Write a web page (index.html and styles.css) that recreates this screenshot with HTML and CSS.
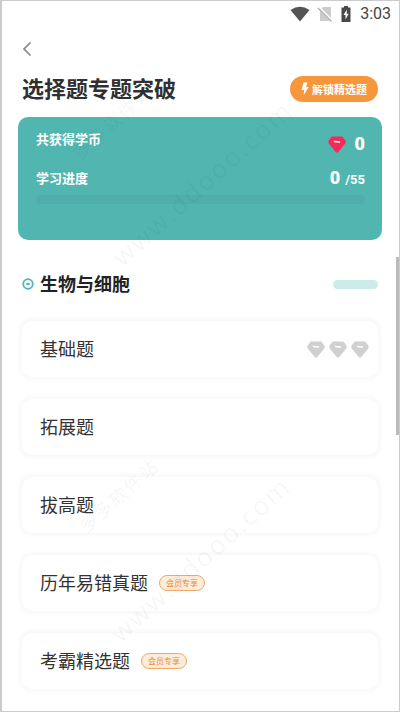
FILE: index.html
```html
<!DOCTYPE html>
<html lang="zh-CN">
<head>
<meta charset="utf-8">
<meta name="viewport" content="width=device-width, initial-scale=1">
<title>选择题专题突破</title>
<link rel="stylesheet" href="styles.css">
</head>
<body>
<svg class="defs" aria-hidden="true">
  <symbol id="gem" viewBox="0 0 18 17">
    <path d="M4 1h10l3 4.200v1.600L9.600 15.800h-1.200L1 6.800V5.200z" fill="currentColor" stroke="currentColor" stroke-width="1.200" stroke-linejoin="round"/>
    <path class="gem-shine" d="M6.500 5.500l5 .5" fill="none" stroke-width="1.600" stroke-linecap="round"/>
  </symbol>
</svg>
<div class="screen">
  <div class="status">
    <svg class="wifi" viewBox="0 0 20 16" aria-hidden="true"><path d="M.5 4Q10-2.500 19.500 4L10 15.500z" fill="#555"/></svg>
    <svg class="sim" viewBox="0 0 16 16" aria-hidden="true"><path d="M6 1h8v14H3V4z" fill="#ccc"/><path d="M1 1l14 14" stroke="#fff" stroke-width="3"/><path d="M1 2l13.500 13.500" stroke="#aaa" stroke-width="1.200"/></svg>
    <svg class="battery" viewBox="0 0 10 16" aria-hidden="true"><path d="M3 0h4v1.500h2.500V16h-9V1.500H3z" fill="#484848"/><path d="M5.800 3.500L2.500 9h2v4.500L7.700 7.800h-2z" fill="#fff"/></svg>
    <span class="clock">3:03</span>
  </div>
  <button class="back" type="button" aria-label="返回">
    <svg viewBox="0 0 10 16" aria-hidden="true"><path d="M8.500 1.500L2 8l6.500 6.500" fill="none" stroke="#888" stroke-width="1.700"/></svg>
  </button>
  <header class="title-row">
    <h1>选择题专题突破</h1>
    <button class="unlock" type="button">
      <svg viewBox="0 0 8 14" aria-hidden="true"><path d="M2.500.5h4L5 5h2.700L2.500 13.500 3.300 8H.5z" fill="#fff"/></svg>
      解锁精选题
    </button>
  </header>
  <section class="summary">
    <div class="stat">
      <span>共获得学币</span>
      <span class="value"><svg class="gem red" aria-hidden="true"><use href="#gem"/></svg><b>0</b></span>
    </div>
    <div class="stat">
      <span>学习进度</span>
      <span class="value progress"><b>0</b><small>/55</small></span>
    </div>
    <div class="track"></div>
  </section>
  <main>
    <div class="section-head">
      <svg class="target" viewBox="0 0 12 12" aria-hidden="true"><circle cx="6" cy="6" r="4.800" fill="#e9f8f6" stroke="#52b6b0" stroke-width="1.700"/><path d="M5.200 6h1.600" stroke="#52b6b0" stroke-width="2" stroke-linecap="round"/></svg>
      <h2>生物与细胞</h2>
      <span class="pill"></span>
    </div>
    <ul class="topics">
      <li><a href="#"><span class="topic">基础题</span><span class="gems"><svg class="gem"><use href="#gem"/></svg><svg class="gem"><use href="#gem"/></svg><svg class="gem"><use href="#gem"/></svg></span></a></li>
      <li><a href="#"><span class="topic">拓展题</span></a></li>
      <li><a href="#"><span class="topic">拔高题</span></a></li>
      <li><a href="#"><span class="topic">历年易错真题</span><span class="member">会员专享</span></a></li>
      <li><a href="#"><span class="topic">考霸精选题</span><span class="member">会员专享</span></a></li>
    </ul>
  </main>
  <div class="scrollbar"></div>
  <div class="mark site first">www.ddooo.com</div>
  <div class="mark name first">多多软件站</div>
  <div class="mark site second">www.ddooo.com</div>
  <div class="mark name second">多多软件站</div>
</div>
</body>
</html>
```

FILE: styles.css
```css
* { box-sizing: border-box; }
body {
  margin: 0;
  background: #fff;
  color: #303030;
  font-family: "Noto Sans CJK SC", sans-serif;
}
h1, h2, ul { margin: 0; padding: 0; }
button { border: 0; padding: 0; font-family: inherit; }
svg { display: block; }
.defs { position: absolute; width: 0; height: 0; }
.screen {
  position: relative;
  overflow: hidden;
  min-height: 100vh;
  padding: 4px 0 20px;
  border: 1px solid #ccc;
  border-left-width: 2px;
}
.status {
  display: flex;
  justify-content: flex-end;
  align-items: center;
  height: 18px;
  padding-right: 8px;
}
.wifi { width: 20px; height: 16px; margin-right: 7px; }
.sim { width: 16px; height: 16px; margin-right: 8px; }
.battery { width: 10px; height: 16px; margin-right: 9px; }
.clock { font: 400 16px/18px Roboto, sans-serif; color: #444; }
.back {
  display: block;
  width: 40px;
  height: 32px;
  margin-top: 10px;
  padding-left: 20px;
  background: none;
}
.back svg { width: 10px; height: 16px; }
.title-row {
  display: flex;
  justify-content: space-between;
  align-items: center;
  height: 32px;
  margin-top: 8px;
  padding: 0 21px 0 20px;
}
h1 { padding-bottom: 5px; font-size: 22px; line-height: 32px; font-weight: 700; }
.unlock {
  display: flex;
  align-items: center;
  justify-content: center;
  gap: 3px;
  width: 88px;
  height: 26px;
  border-radius: 13px;
  background: #f7963b;
  color: #fff;
  font-size: 11px;
  font-weight: 700;
}
.unlock svg { width: 8px; height: 14px; }
.summary {
  height: 123px;
  margin: 12px 17px 0 16px;
  padding: 10px 17px 0 18px;
  border-radius: 10px;
  background: #52b6b0;
  color: #fff;
}
.stat {
  display: flex;
  justify-content: space-between;
  align-items: flex-start;
  height: 34px;
  font-size: 13px;
  line-height: 24px;
  font-weight: 700;
}
.stat + .stat { margin-top: 5px; height: 29px; }
.value { display: flex; align-items: center; gap: 9px; height: 34px; font-family: Roboto, sans-serif; }
.value b { font-size: 18px; }
.red { color: #f22a5a; }
.gem-shine { stroke: #fff; }
.progress { align-items: baseline; gap: 5px; height: 24px; }
.value small { font-size: 13px; }
.track { height: 9px; border-radius: 5px; background: #4eafaa; }
main { padding: 31px 21px 0 20px; }
.section-head { display: flex; align-items: center; height: 26px; }
.target { width: 12px; height: 12px; }
h2 { flex: 1; margin-left: 6px; padding-bottom: 2px; font-size: 18px; line-height: 26px; font-weight: 700; color: #222; }
.pill { width: 45px; height: 9px; border-radius: 5px; background: #cdebe8; }
.topics { display: grid; gap: 22px; margin-top: 24px; list-style: none; }
.topics a {
  display: flex;
  align-items: center;
  height: 56px;
  padding: 0 9px 0 18px;
  border-radius: 10px;
  background: #fff;
  box-shadow: 0 0 4px 3px #f9f9f9;
  color: #333;
  font-size: 18px;
  line-height: 26px;
  text-decoration: none;
}
.topic { padding-bottom: 2px; }
.gem { width: 18px; height: 17px; }
.gems { display: flex; gap: 4px; margin-left: auto; color: #d0d0d0; }
.member {
  width: 46px;
  height: 16px;
  margin-left: 11px;
  border: 1px solid #eda96b;
  border-radius: 8px;
  background: #fdecd8;
  color: #ee8a38;
  font-size: 8px;
  line-height: 14px;
  text-align: center;
}
.scrollbar {
  position: absolute;
  top: 256px;
  right: 0;
  width: 3px;
  height: 178px;
  background: #bbb;
}
.mark {
  position: absolute;
  color: rgba(0, 0, 0, .05);
  white-space: nowrap;
  transform: translate(-50%, -50%) rotate(-42deg);
  pointer-events: none;
}
.site { font: 500 26px/28px "Open Sans", sans-serif; letter-spacing: 2px; }
.name { font-size: 18px; line-height: 26px; letter-spacing: 2px; }
.site.first { left: 200px; top: 182px; }
.name.first { left: 110px; top: 120px; }
.site.second { left: 198px; top: 558px; }
.name.second { left: 116px; top: 494px; }
```
